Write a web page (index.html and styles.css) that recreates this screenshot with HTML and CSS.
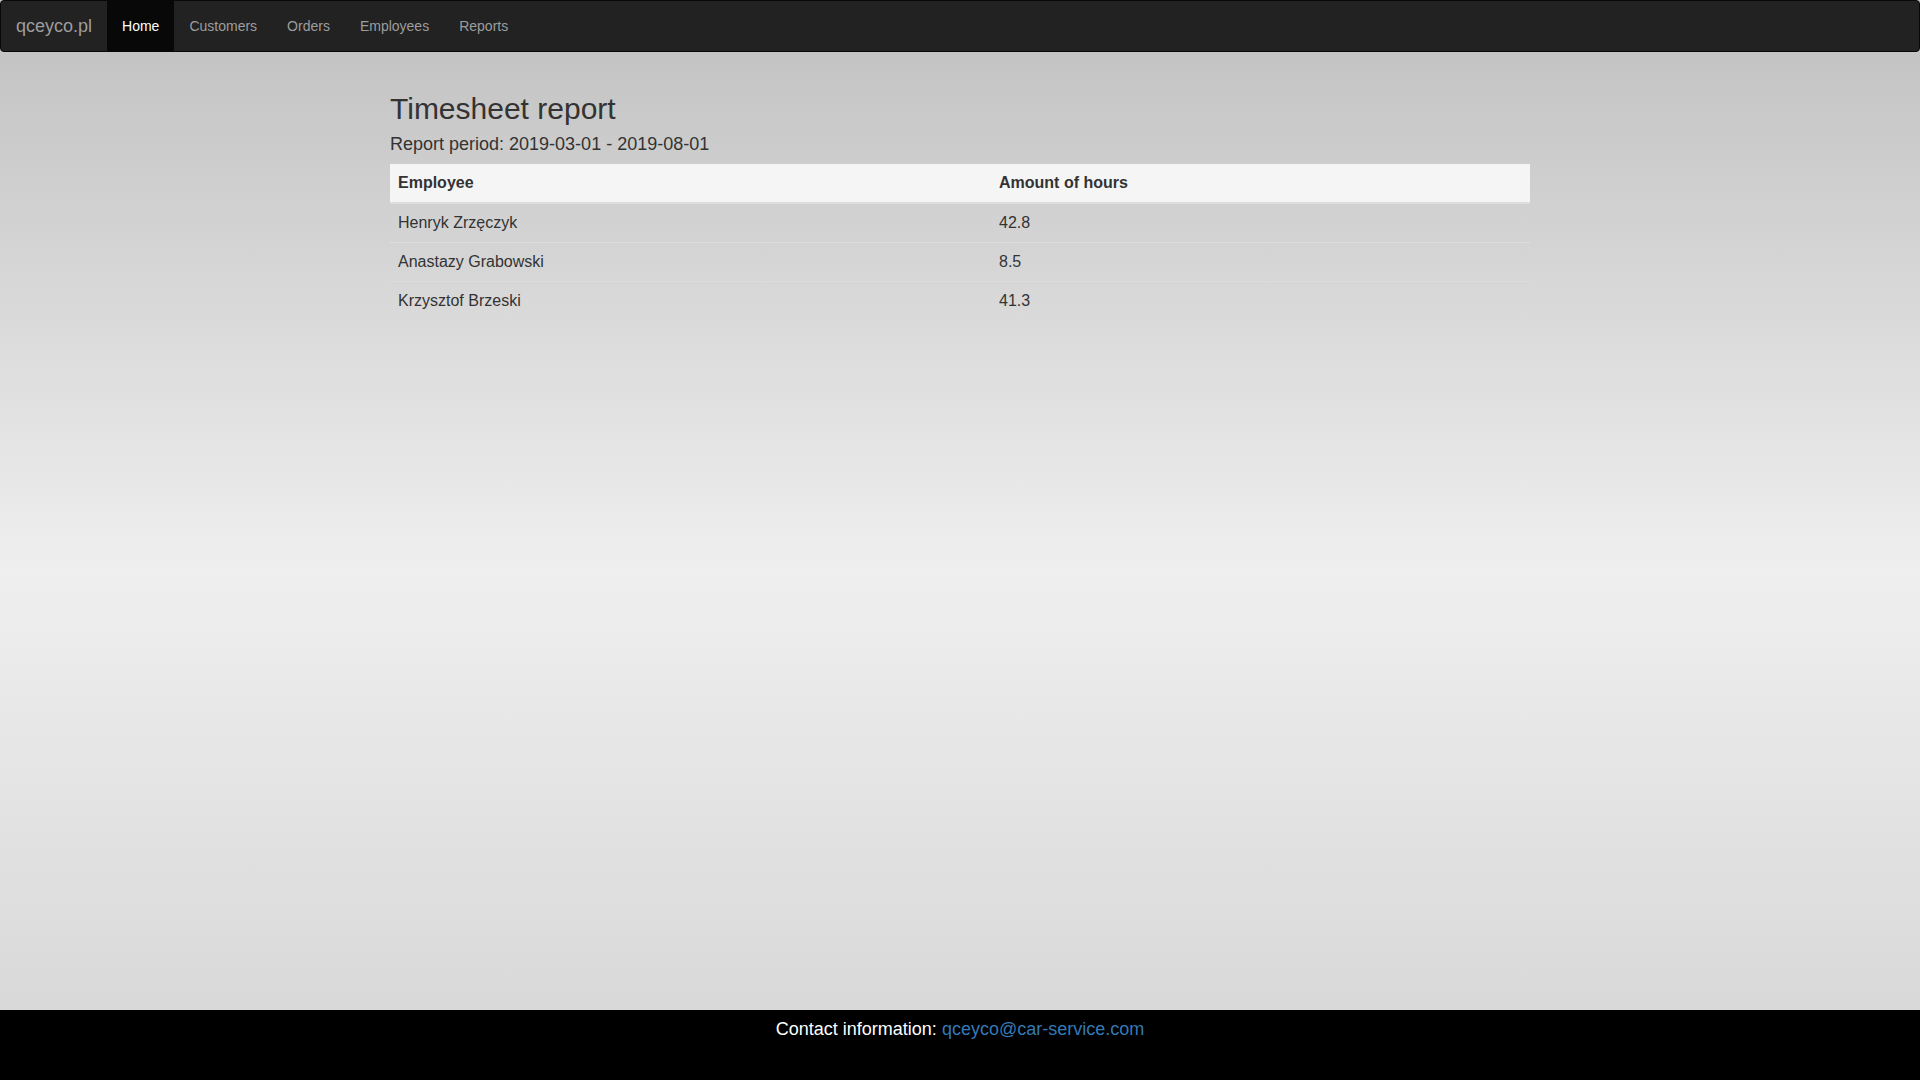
FILE: index.html
```html
<!DOCTYPE html>
<html lang="pl">
<head>
<meta charset="utf-8">
<title>Timesheet report</title>
<link rel="stylesheet" href="styles.css">
</head>
<body>
<nav class="navbar">
  <a class="brand" href="#">qceyco.pl</a>
  <ul class="nav">
    <li class="active"><a href="#">Home</a></li>
    <li><a href="#">Customers</a></li>
    <li><a href="#">Orders</a></li>
    <li><a href="#">Employees</a></li>
    <li><a href="#">Reports</a></li>
  </ul>
</nav>
<main class="main">
  <div class="container">
    <h2 class="title">Timesheet report</h2>
    <h4 class="period">Report period: 2019-03-01 - 2019-08-01</h4>
    <table class="report">
      <thead>
        <tr><th class="col-name">Employee</th><th>Amount of hours</th></tr>
      </thead>
      <tbody>
        <tr><td>Henryk Zrzęczyk</td><td>42.8</td></tr>
        <tr><td>Anastazy Grabowski</td><td>8.5</td></tr>
        <tr><td>Krzysztof Brzeski</td><td>41.3</td></tr>
      </tbody>
    </table>
  </div>
</main>
<footer class="footer">
  <p class="contact">Contact information: <a href="#">qceyco@car-service.com</a></p>
</footer>
</body>
</html>
```

FILE: styles.css
```css
* { box-sizing: border-box; }
html, body { height: 100%; }
body {
  margin: 0;
  font-family: "Liberation Sans", Arial, Helvetica, sans-serif;
  font-size: 16px;
  line-height: 1.42857;
  color: #333;
  background: linear-gradient(to bottom, #c0c0c0 0%, #c4c4c4 5%, #efefef 53%, #d5d5d5 100%);
  display: flex;
  flex-direction: column;
  min-height: 100vh;
}
.navbar {
  display: flex;
  align-items: stretch;
  height: 52px;
  background: #222;
  border: 1px solid #080808;
  border-radius: 4px;
  padding: 0 15px;
  flex-shrink: 0;
}
.brand {
  display: block;
  font-size: 18px;
  line-height: 20px;
  padding: 15px 15px 15px 0;
  color: #9d9d9d;
  text-decoration: none;
}
.nav {
  list-style: none;
  margin: 0;
  padding: 0;
  display: flex;
}
.nav a {
  display: block;
  padding: 15px;
  font-size: 14px;
  line-height: 20px;
  color: #9d9d9d;
  text-decoration: none;
}
.nav .active a {
  color: #fff;
  background: #080808;
}
.main {
  flex: 1;
}
.container {
  width: 1170px;
  margin: 0 auto;
  padding: 40px 15px 0;
}
.title {
  margin: 0;
  font-size: 30px;
  font-weight: 500;
  line-height: 1.1;
  color: #333;
}
.period {
  margin: 10px 0 9px;
  font-size: 18px;
  font-weight: 500;
  line-height: 1.1;
  color: #333;
}
.report {
  width: 100%;
  border-collapse: collapse;
  border-spacing: 0;
  line-height: 22px;
}
.report th {
  text-align: left;
  font-weight: bold;
  padding: 8px;
  background: #f5f5f5;
  border-bottom: 2px solid #ddd;
}
.report td {
  padding: 8px;
  border-top: 1px solid #ddd;
}
.report tbody tr:first-child td { border-top: 0; }
.col-name { width: 601px; }
.footer {
  height: 70px;
  background: #000;
  flex-shrink: 0;
}
.contact {
  margin: 0;
  padding-top: 7px;
  text-align: center;
  font-size: 18px;
  color: #fff;
}
.contact a {
  color: #337ab7;
  text-decoration: none;
}
```
